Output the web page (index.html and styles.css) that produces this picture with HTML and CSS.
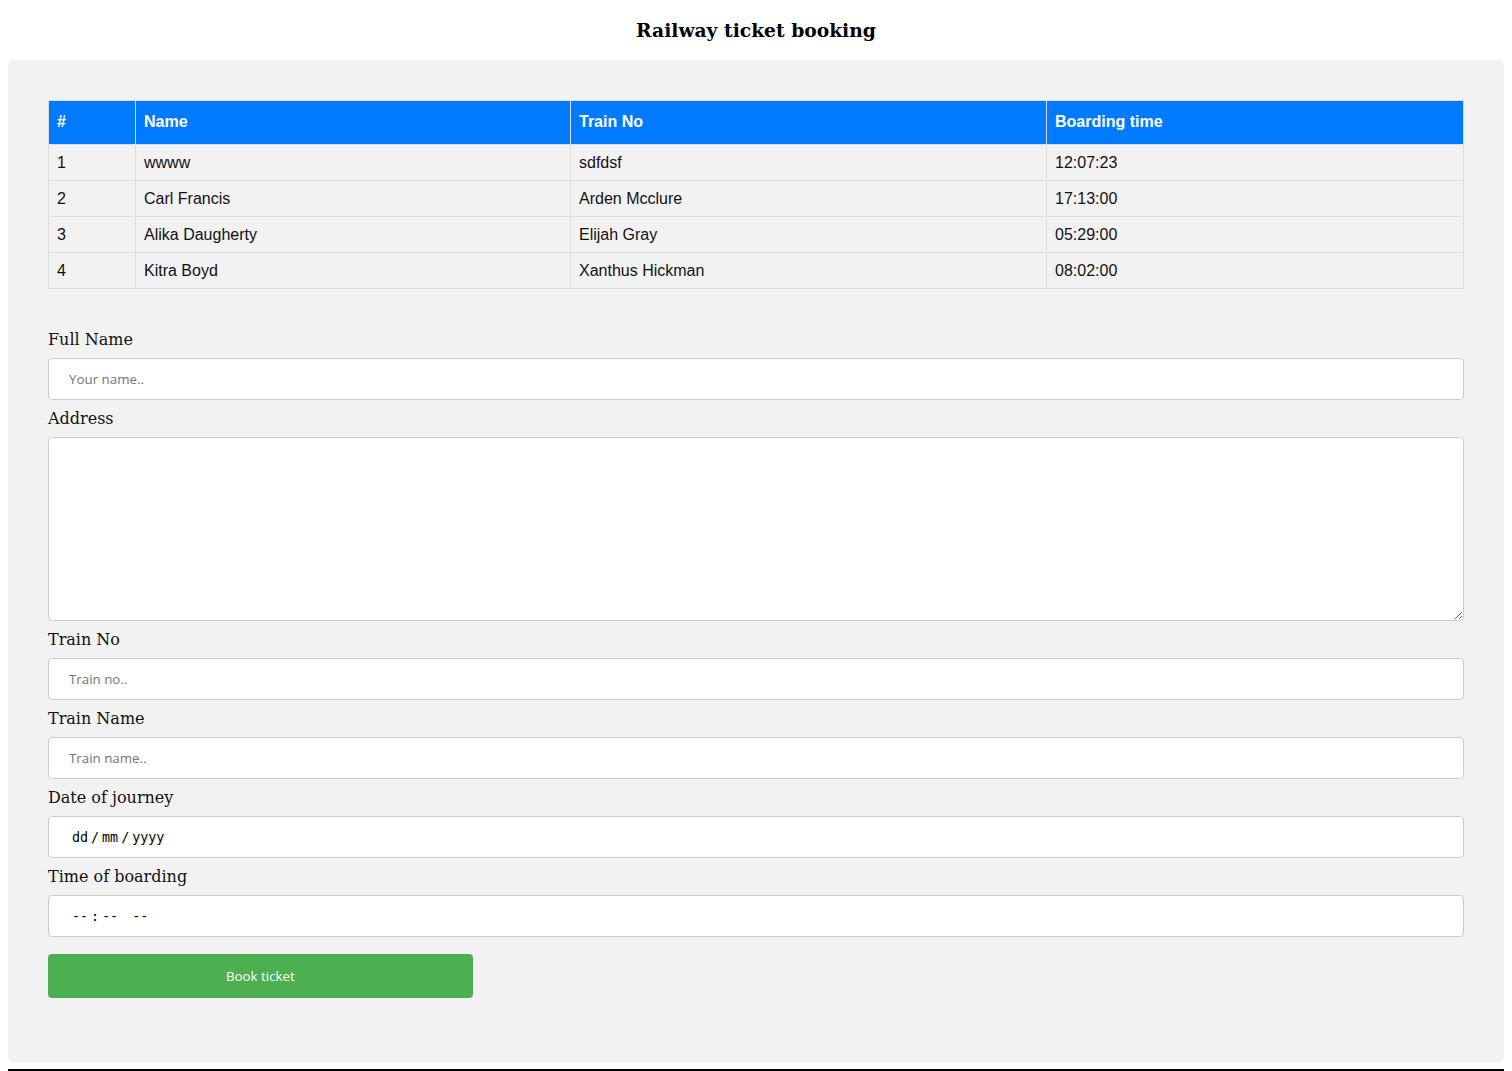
FILE: index.html
```html
<!DOCTYPE html>
<html lang="en">
<head>
<meta charset="utf-8">
<title>Railway ticket booking</title>
<link rel="stylesheet" href="styles.css">
</head>
<body>
<h3 class="title">Railway ticket booking</h3>
<div class="panel">
  <table class="tickets">
    <thead>
      <tr><th class="c1">#</th><th class="c2">Name</th><th class="c3">Train No</th><th class="c4">Boarding time</th></tr>
    </thead>
    <tbody>
      <tr><td>1</td><td>wwww</td><td>sdfdsf</td><td>12:07:23</td></tr>
      <tr><td>2</td><td>Carl Francis</td><td>Arden Mcclure</td><td>17:13:00</td></tr>
      <tr><td>3</td><td>Alika Daugherty</td><td>Elijah Gray</td><td>05:29:00</td></tr>
      <tr><td>4</td><td>Kitra Boyd</td><td>Xanthus Hickman</td><td>08:02:00</td></tr>
    </tbody>
  </table>
  <form class="form">
    <label class="lbl" for="fname">Full Name</label>
    <input class="field" id="fname" type="text" placeholder="Your name..">
    <label class="lbl" for="addr">Address</label>
    <textarea class="field area" id="addr"></textarea>
    <label class="lbl" for="tno">Train No</label>
    <input class="field" id="tno" type="text" placeholder="Train no..">
    <label class="lbl" for="tname">Train Name</label>
    <input class="field" id="tname" type="text" placeholder="Train name..">
    <label class="lbl">Date of journey</label>
    <div class="field fake">
      <span class="seg2">dd</span><span class="sep">/</span><span class="seg2">mm</span><span class="sep">/</span><span class="seg4">yyyy</span>
    </div>
    <label class="lbl">Time of boarding</label>
    <div class="field fake">
      <span class="seg2">--</span><span class="sep">:</span><span class="seg2">--</span><span class="ampm">--</span>
    </div>
    <button class="book" type="button">Book ticket</button>
  </form>
</div>
<div class="bottom-line"></div>
</body>
</html>
```
FILE: styles.css
```css
html, body {
  background: #ffffff;
}
body {
  margin: 0 8px 0 8px;
  font-family: "DejaVu Serif", serif;
}
.title {
  margin: 0;
  padding-top: 19px;
  height: 60px;
  text-align: center;
  font-size: 18.72px;
  font-weight: bold;
  line-height: 22px;
  box-sizing: border-box;
}
.panel {
  background: #f2f2f2;
  border-radius: 5px;
  padding: 40px 40px 64px 40px;
  height: 1002px;
  box-sizing: border-box;
}
.tickets {
  width: 100%;
  border-collapse: collapse;
  font-family: "Liberation Sans", Arial, sans-serif;
  font-size: 16px;
  table-layout: fixed;
}
.tickets th, .tickets td {
  border: 1px solid #ddd;
  padding: 8px;
  text-align: left;
  height: 19px;
  line-height: 19px;
}
.tickets th {
  padding-top: 11px;
  padding-bottom: 13px;
  background: #007bff;
  color: #ffffff;
  font-weight: bold;
}
.tickets td {
  color: #111;
}
.c1 { width: 70px; }
.c2 { width: 418px; }
.c3 { width: 459px; }
.form {
  display: flex;
  flex-direction: column;
  align-items: flex-start;
  margin-top: 40px;
}
.lbl {
  display: block;
  font-size: 16px;
  line-height: 21px;
  height: 19px;
  color: #111;
  margin-bottom: 10px;
}
.field {
  width: 100%;
  height: 42px;
  box-sizing: border-box;
  padding: 12px 20px;
  border: 1px solid #ccc;
  border-radius: 4px;
  background: #fff;
  margin: 0 0 8px 0;
  font-family: "Open Sans", sans-serif;
  font-size: 13.33px;
  color: #000;
}
.field::placeholder {
  color: #757575;
}
.area {
  height: 184px;
  resize: vertical;
}
.fake {
  display: flex;
  align-items: center;
  padding: 0 0 0 23px;
  font-family: "DejaVu Sans Mono", monospace;
  font-size: 13.33px;
  color: #000;
  gap: 3px;
}
.fake .ampm {
  margin-left: 11px;
}
.book {
  margin-top: 9px;
  width: 30%;
  height: 44px;
  background: #4caf50;
  color: #fff;
  border: none;
  border-radius: 4px;
  font-family: "Open Sans", sans-serif;
  font-size: 13.33px;
}
.bottom-line {
  margin: 7px -8px 0 -8px;
  height: 2px;
  background: #000;
}
```
